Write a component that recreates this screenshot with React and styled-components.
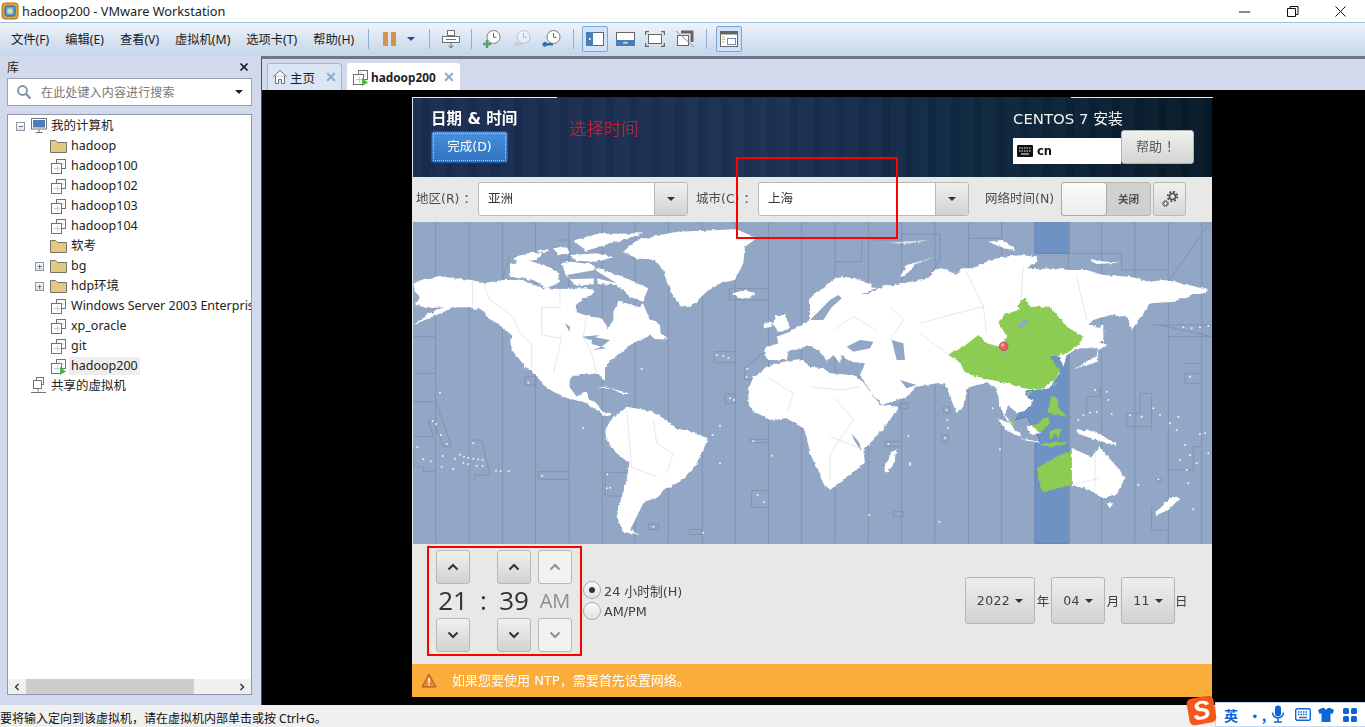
import React from "react";
import styled, { createGlobalStyle } from "styled-components";

const UI = `"Noto Sans", "Noto Sans CJK SC", sans-serif`;
const GUEST = `"DejaVu Sans", "Noto Sans CJK SC", sans-serif`;

const Global = createGlobalStyle`
  html, body { margin: 0; padding: 0; height: 100%; overflow: hidden; background: #fff; }
  #root { height: 100%; }
  * { box-sizing: border-box; }
  svg { flex: none; }
`;

const Page = styled.div`
  width: 1365px; height: 727px; display: flex; flex-direction: column;
  font-family: ${UI}; color: #222; background: #d3d9ec; overflow: hidden;
`;

/* ---------- title bar ---------- */
const TitleBar = styled.div`
  height: 22px; flex: none; background: #fff; display: flex; align-items: center; padding-left: 0;
`;
const TitleText = styled.div`font-size: 12.75px; margin-left: 2px; color: #1c1c1c; flex: 1;`;
const WinButtons = styled.div`display: flex; align-items: center; gap: 33px; padding-right: 17px;`;
const WinGlyph = styled.svg`width: 15px; height: 15px; display: block;`;

/* ---------- toolbar ---------- */
const ToolBar = styled.div`
  height: 33px; flex: none; display: flex; align-items: center; padding-left: 11px;
  background: linear-gradient(#eef3fa, #c6d6ea); border-top: 1px solid #9dbfe0;
`;
const Menu = styled.div`display: flex; gap: 16px; font-size: 12.25px; color: #1b1b1b; width: 355px; white-space: nowrap;`;
const MenuItem = styled.span``;
const Sep = styled.div`width: 1px; height: 20px; background: #8fb0d2; flex: none; margin-left: ${p => p.$ml || 0}px;`;
const ToolIcon = styled.div`
  flex: none; width: ${p => p.$w || 26}px; height: 26px; margin-left: ${p => p.$ml || 0}px;
  display: flex; align-items: center; justify-content: center; border-radius: 2px;
  border: 1px solid ${p => (p.$active ? "#7ea6d2" : "transparent")};
  background: ${p => (p.$active ? "#cfe2f8" : "transparent")};
`;

/* ---------- body ---------- */
const Body = styled.div`flex: 1; display: flex; min-height: 0;`;
const Sidebar = styled.div`
  width: 261px; flex: none; display: flex; flex-direction: column; padding: 0 9px 10px 7px;
`;
const SideHead = styled.div`
  height: 23px; display: flex; align-items: center; justify-content: space-between; font-size: 12px; padding: 1px 3px 0 0; flex: none;
`;
const SearchBox = styled.div`
  height: 28px; flex: none; background: #fff; border: 1px solid #9aa3b5; display: flex; align-items: center; padding: 0 8px;
  font-size: 12px; color: #777;
`;
const SearchText = styled.span`margin-left: 9px; flex: 1; letter-spacing: .15px;`;
const Caret = styled.span`
  width: 0; height: 0; border-left: 4px solid transparent; border-right: 4px solid transparent; border-top: 4px solid ${p => p.$c || "#222"};
`;
const TreePanel = styled.div`
  margin-top: 8px; flex: 1; min-height: 0; background: #fff; border: 1px solid #8e98ac; display: flex; flex-direction: column; overflow: hidden;
`;
const Tree = styled.div`flex: 1; padding-top: 1px; overflow: hidden;`;
const Row = styled.div`
  height: 20px; display: flex; align-items: center; white-space: nowrap; font-size: 12.5px; color: #222;
  padding-left: ${p => (p.$level ? 27 : 8)}px;
`;
const Expander = styled.div`
  width: 9px; height: 9px; flex: none; margin-right: 6px; display: flex; align-items: center; justify-content: center;
  ${p => p.$show && `border: 1px solid #8d96a5; background: linear-gradient(#fff,#dfe3ea);`}
  font-size: 9px; line-height: 1; color: #333;
`;
const Label = styled.span`
  flex: none; margin-left: 2px; padding: 0 2px; height: 18px; line-height: 18px;
  background: ${p => (p.$sel ? "#eeeeee" : "transparent")};
`;
const HScroll = styled.div`
  height: 15px; flex: none; background: #f0f0f0; display: flex; align-items: center; padding: 0 5px; gap: 5px;
`;
const ScrollTrack = styled.div`flex: 1; height: 15px; display: flex;`;
const ScrollThumb = styled.div`width: 168px; background: #cdcdcd;`;
const ScrollArrow = styled.svg`width: 8px; height: 8px; flex: none;`;

const MainPane = styled.div`
  flex: 1; min-width: 0; display: flex; flex-direction: column; border-left: 1px solid #4d5260; border-top: 3px solid #6f7585; margin-top: 1px;
`;
const TabBar = styled.div`
  height: 31px; flex: none; display: flex; align-items: flex-end; padding-left: 5px; gap: 5px; background: #d3d9ec;
`;
const Tab = styled.div`
  height: 27px; width: ${p => p.$w}px; display: flex; align-items: center; border-radius: 3px 3px 0 0; padding: 0 4px 0 4px;
  background: ${p => (p.$active ? "#fff" : "#dbe6f4")};
  border: 1px solid ${p => (p.$active ? "#fff" : "#9db8d6")}; border-bottom: 0;
  font-size: ${p => (p.$active ? 11.8 : 12.5)}px; font-weight: ${p => (p.$active ? 700 : 400)}; color: #1f1f1f;
`;
const TabLabel = styled.span`margin-left: 2px; flex: 1; white-space: nowrap;`;
const TabClose = styled.span`color: #8da9c4; font-size: 14px; font-weight: 700; line-height: 1;`;

const Viewport = styled.div`flex: 1; min-height: 0; background: #000; padding: 7px 0 0 150px;`;

/* ---------- guest ---------- */
const GuestFrame = styled.div`position: relative; width: 800px; height: 600px;`;
const Guest = styled.div`
  width: 800px; height: 600px; display: flex; flex-direction: column; font-family: ${GUEST};
  filter: blur(.35px); color: #3a3f42;
`;
const Header = styled.div`
  height: 80px; flex: none; display: flex; justify-content: space-between; padding: 13px 18px 0 18px; position: relative;
  background:
    repeating-linear-gradient(90deg, rgba(255,255,255,.018) 0 9px, rgba(0,0,0,.03) 9px 17px, rgba(255,255,255,.012) 17px 23px),
    linear-gradient(90deg, #1a2c50, #1b3054 45%, #0f2840 70%, #071a28);
  border-left: 1px solid #dfe5ee;
`;
const TopEdge = styled.div`
  position: absolute; top: 0; height: 1px; background: #e8e8e8; left: ${p => p.$l}px; width: ${p => p.$w}px;
`;
const HeadLeft = styled.div`display: flex; flex-direction: column;`;
const HeadTitle = styled.div`color: #fff; font-size: 15.5px; font-weight: 700; line-height: 19px;`;
const DoneButton = styled.div`
  margin-top: 2px; width: 77px; height: 32px; border-radius: 3px; display: flex; align-items: center; justify-content: center;
  padding-bottom: 3px; color: #fff; font-size: 12.5px; background: linear-gradient(#4a90d9, #2f72c0); border: 1px solid #1e5ba5;
  outline: 1px dotted #a8cdf2; outline-offset: -3px;
`;
const HeadRight = styled.div`display: flex; flex-direction: column; width: 181px;`;
const Centos = styled.div`color: #f2f2f2; font-size: 14.9px; line-height: 19px;`;
const KbRow = styled.div`display: flex; align-items: flex-end; height: 34px; margin-top: 1px;`;
const KbBox = styled.div`
  width: 108px; height: 26px; background: #fff; display: flex; align-items: center; padding-left: 4px; gap: 4px;
  color: #111; font-size: 11.5px; font-weight: 700;
`;
const HelpButton = styled.div`
  width: 73px; height: 34px; border-radius: 3px; display: flex; align-items: center; justify-content: center; padding-bottom: 3px;
  font-size: 13px; color: #55595c; background: linear-gradient(#f0f0ee, #d4d4d2); border: 1px solid #b5b5b3; white-space: pre;
`;

const Controls = styled.div`
  height: 45px; flex: none; background: #e8e8e7; display: flex; align-items: center; padding: 0 0 1px 4px; font-size: 12.5px; color: #4a4e50;
`;
const ControlLabel = styled.span`width: ${p => p.$w}px; padding-left: ${p => p.$pl || 0}px; padding-bottom: 3px; flex: none; white-space: pre;`;
const Combo = styled.div`
  width: ${p => p.$w}px; height: 34px; flex: none; display: flex; background: #fff; border: 1px solid #b8b8b6; border-radius: 3px; margin-right: 8px; overflow: hidden;
`;
const ComboText = styled.div`flex: 1; padding: 0 0 3px 9px; display: flex; align-items: center; color: #2e3436; font-size: 12.5px;`;
const ComboArrow = styled.div`
  width: 33px; flex: none; display: flex; align-items: center; justify-content: center; border-left: 1px solid #b8b8b6;
  background: linear-gradient(#f0f0ee, #d2d2d0);
`;
const Switch = styled.div`
  width: 90px; height: 34px; flex: none; display: flex; background: #d0d0ce; border: 1px solid #b8b8b6; border-radius: 3px;
`;
const SwitchKnob = styled.div`width: 46px; margin: -1px 0 -1px -1px; background: linear-gradient(#fbfbfa, #ececea); border: 1px solid #a8a8a6; border-radius: 3px;`;
const SwitchText = styled.div`flex: 1; display: flex; align-items: center; justify-content: center; padding-bottom: 2px; font-size: 10.5px; font-weight: 700; color: #4a4e50;`;
const GearButton = styled.div`
  width: 33px; height: 34px; flex: none; margin-left: 2px; display: flex; align-items: center; justify-content: center;
  background: linear-gradient(#f0f0ee, #d8d8d6); border: 1px solid #b8b8b6; border-radius: 3px;
`;
const MapWrap = styled.div`height: 322px; flex: none; background: #92a6c6; border-left: 1px solid #e8e8e7;`;
const MapSvg = styled.svg`width: 799px; height: 322px; display: block;`;

const TimeRow = styled.div`
  height: 120px; flex: none; background: #e8e8e7; display: flex; padding: 6px 25px 0 24px; align-items: flex-start;
`;
const Spinner = styled.div`
  display: grid; grid-template-columns: 34px 27px 34px 7px 34px; grid-template-rows: 34px 34px 34px;
`;
const SpinButton = styled.div`
  grid-column: ${p => p.$col}; grid-row: ${p => p.$row}; border-radius: 3px; display: flex; align-items: center; justify-content: center;
  border: 1px solid #b8b8b6;
  background: ${p => (p.$off ? "#f2f2f1" : "linear-gradient(#f0f0ee, #d2d2d0)")};
`;
const Digit = styled.div`
  grid-column: ${p => p.$col}; grid-row: 2; display: flex; align-items: center; justify-content: center; white-space: nowrap;
  padding-bottom: 2px; font-family: "Open Sans", sans-serif;
  font-size: ${p => p.$size || 26}px; color: ${p => p.$c || "#2e3436"};
`;
const RadioCol = styled.div`margin: 31px 0 0 11px; display: flex; flex-direction: column; gap: 3px;`;
const RadioRow = styled.div`display: flex; align-items: center; height: 18px; font-size: 12.8px; color: #3c4144; gap: 3px; white-space: nowrap;`;
const Radio = styled.div`
  width: 18px; height: 18px; border-radius: 50%; border: 1px solid #a9a9a7; background: linear-gradient(#fafafa, #e2e2e0);
  display: flex; align-items: center; justify-content: center;
`;
const RadioDot = styled.div`width: 6px; height: 6px; border-radius: 50%; background: #2e3436;`;
const DateRow = styled.div`margin: 27px 0 0 auto; display: flex; align-items: center; font-size: 12.5px; color: #3c4144;`;
const DateButton = styled.div`
  width: ${p => p.$w}px; height: 47px; display: flex; align-items: center; justify-content: center; gap: 5px; border-radius: 3px;
  background: linear-gradient(#eeeeec, #d2d2d0); border: 1px solid #b5b5b3; font-size: 12.5px; letter-spacing: .4px;
`;
const DateUnit = styled.span`width: ${p => p.$w}px; text-align: center;`;
const Warning = styled.div`
  height: 33px; flex: none; background: #fbad3c; display: flex; align-items: center; padding-left: 9px; color: #fff; font-size: 13px;
`;
const WarningText = styled.span`margin-left: 15px; padding-bottom: 2px;`;

const RedBox = styled.div`
  position: absolute; border: 2px solid #f00; pointer-events: none;
  left: ${p => p.$l}px; top: ${p => p.$t}px; width: ${p => p.$w}px; height: ${p => p.$h}px;
`;
const RedNote = styled.div`
  position: absolute; left: 157px; top: 19px; color: #e8181e; font: 300 17.3px "Noto Sans CJK SC", sans-serif; line-height: 24px;
`;

/* ---------- status ---------- */
const StatusBar = styled.div`
  height: 22px; flex: none; background: #f0f0f0; position: relative; font-size: 12px; color: #111; display: flex; align-items: center; padding-top: 3px;
`;
const Ime = styled.div`
  position: absolute; right: 0; top: -3px; height: 25px; width: 150px; background: #fff; border: 1px solid #c6d9f0; border-right: 0;
  display: flex; align-items: center; color: #0b66d6; font-weight: 700;
`;
const ImeSlot = styled.div`
  width: ${p => p.$w}px; flex: none; display: flex; align-items: center; justify-content: center;
  font-family: "Noto Sans CJK SC", sans-serif; font-size: 14px; line-height: 1;
`;
const ImeLogo = styled.div`
  position: absolute; right: 150px; top: -8px; width: 27px; height: 27px; border-radius: 5px; background: #f4571c; transform: rotate(-10deg);
  color: #fff; font: italic 900 26px "Liberation Sans", sans-serif; display: flex; align-items: center; justify-content: center; z-index: 1;
`;

/* ---------- icons ---------- */
const VmIcon = ({ play }) => (
  <svg width="17" height="17" viewBox="0 0 17 17" fill="none">
    <rect x="6.5" y="1.5" width="9" height="9" fill="#fff" stroke="#6f747c" />
    <rect x="1.5" y="5.5" width="10" height="10" fill="#fff" stroke="#6f747c" />
    <path d="M4 10.5h6M7.5 7.5v6M9 3v2M12 6h2" stroke="#b9cde4" />
    {play && <path d="M10 9l6 4.5-6 3.5z" fill="#4fb53c" />}
  </svg>
);
const FolderIcon = () => (
  <svg width="17" height="14" viewBox="0 0 17 14">
    <path d="M.5 1.5h5l2 2h9v10H.5z" fill="#e3c87f" stroke="#77736a" />
  </svg>
);
const PcIcon = () => (
  <svg width="16" height="16" viewBox="0 0 16 16">
    <rect x=".5" y=".5" width="15" height="10.5" fill="#fff" stroke="#6f747c" />
    <rect x="2" y="2" width="12" height="7.5" fill="#4b7db8" />
    <path d="M8 11v3M4.5 14.5h7" stroke="#6f747c" />
  </svg>
);
const SharedIcon = () => (
  <svg width="16" height="18" viewBox="0 0 16 18" fill="none" stroke="#6f747c">
    <rect x="5.5" y=".5" width="7" height="7" fill="#fff" />
    <rect x="2.5" y="3.5" width="8" height="8" fill="#fff" />
    <path d="M7 11.5v3M0 15.5h15" />
  </svg>
);
const Snap = ({ overlay, faded }) => (
  <svg width="20" height="20" viewBox="0 0 20 20" fill="none" opacity={faded ? 0.35 : 1}>
    <circle cx="11.5" cy="8" r="6.5" fill="#fff" stroke="#7a7f85" />
    <path d="M11.5 4v4.3h3" stroke="#666" />
    {overlay}
  </svg>
);
const PlainArrow = ({ dir = "up", c = "#2e3436" }) => (
  <svg width="12" height="8" viewBox="0 0 12 8" fill="none">
    <path d={dir === "up" ? "M1.5 6.5L6 2l4.5 4.5" : "M1.5 1.5L6 6l4.5-4.5"} stroke={c} strokeWidth="2" />
  </svg>
);

/* ---------- map ---------- */
const WATER = "#92a6c6";
const Z9 = "translate(-3 -2) scale(.33333)";
const Z10 = "translate(397 -2) scale(.33333)";

const TzLines = () => (
  <g stroke="#8193b1" fill="none" strokeWidth="3">
    {[77, 178, 277, 377, 477, 577, 675, 775, 877, 976, 1075, 1175].map(x => (
      <path key={x} transform={Z9} d={`M${x} 0V970`} />
    ))}
    {[75, 175, 275, 375, 475, 575, 775, 875, 975, 1075, 1175].map(x => (
      <path key={x} transform={Z10} d={`M${x} 0V970`} />
    ))}
    <g transform={Z9}>
      <path d="M10 350H77V460H10M10 545H77L125 680H100L70 600H55L70 650H10M10 680V740H40V755H77M178 660H215L240 765H195V780H178M345 470H378V495H345ZM385 755H477M385 755V778H477M585 757H655M585 757V828H635M913 395H976M913 395V428H976M945 522H976V550H945ZM1025 812H1075M1025 812V862H1075M1020 658H1075V668H1020ZM838 928H877V943H838ZM715 912H745V928H715ZM958 205H1075M958 205V240H1075M1003 445L1075 385M1003 445V478H1035M445 60H477V120H445M300 105L277 180" />
    </g>
    <g transform={Z10}>
      <path d="M75 125H155V65M175 60H275V42H390V120L360 165M475 55H575V0M775 100H935V150H1075M1075 185L1205 0M1025 315H1205M1050 315L1205 350H1075M1125 430H1175V460H1125V490H1175M1025 630V520H990V580H950V620H1025M1075 630V750H1150V680H1175M830 580V530H870V500M1040 775H1055V785H1040ZM1025 860V930H1075V970M225 665H275M225 665V680H275M270 550H295V565H270ZM250 875H280V890H250ZM400 560H420V580H400ZM395 645H415V665H395Z" />
    </g>
  </g>
);

const Land = () => (
  <g fill="#fff" stroke="none" filter="url(#rough)">
    <g transform={Z9}>
      {/* North and Central America */}
      <path d="M10 192L40 178L90 168L130 175L185 180L222 190L280 180L335 180L400 205L450 207L530 205L555 212L545 225L520 235L498 255L497 275L530 287L575 295L595 325L610 300L610 275L625 245L650 250L690 262L700 250L715 290L750 315L752 340L772 358L720 345L680 365L650 385L625 405L598 425L585 450L585 482L565 462L510 462L480 475L478 500L500 530L530 515L537 540L555 545L578 575L605 580L590 590L560 570L520 545L480 538L430 515L400 495L365 450L345 440L330 420L305 390L300 360L310 350L270 315L235 295L220 270L175 262L130 262L80 285L10 315L60 280L100 262L50 265L15 250L30 230L15 215Z" />
      <path d="M300 135L340 118L385 130L440 150L450 185L410 207L370 180L300 170Z" />
      <path d="M310 112L370 95L395 100L380 120L320 125Z" />
      <path d="M380 92L420 90L400 100Z" />
      <path d="M430 85L470 80L480 100L445 105Z" />
      <path d="M490 62L560 42L700 40L640 60L600 70L530 92Z" />
      <path d="M480 105L560 100L610 112L560 125L500 122Z" />
      <path d="M455 130L480 125L540 132L580 150L640 170L715 205L698 245L660 230L620 195L560 192L500 197L470 170Z" />
      {/* Greenland, Iceland */}
      <path d="M640 95L680 60L800 35L980 28L1040 55L1005 80L1000 130L975 180L930 190L890 215L840 262L810 255L785 220L770 185L760 150L735 120L680 115Z" />
      <path d="M968 220L1000 210L1035 220L1020 235L985 235Z" />
      <path d="M695 300L745 320L750 350L775 358L735 358L710 335L690 320Z" />
      {/* South America */}
      <path d="M585 630L610 590L650 560L720 572L760 595L800 625L850 635L893 655L880 690L860 730L830 770L800 790L760 810L745 830L700 850L680 890L660 930L690 945L640 935L620 890L635 830L650 780L658 730L620 700L590 660Z" />
      <path d="M560 502L600 505L640 522L665 522L620 510L590 500Z" />
      {/* British Isles */}
      <path d="M1090 310L1095 285L1125 285L1140 322L1115 335L1100 330Z" />
      <path d="M1060 310L1085 305L1085 320L1062 325Z" />
    </g>
    <g transform={Z10}>
      {/* Africa */}
      <path d="M-185 510L-170 470L-130 440L-80 425L-20 420L0 440L40 445L60 460L130 465L155 480L210 555L265 560L240 600L190 660L160 690L165 730L110 770L60 810L40 790L0 700L-10 650L-20 625L-70 595L-120 600L-170 575L-185 545Z" />
      {/* Eurasia */}
      <path d="M0 300L0 235L30 210L75 175L110 170L135 178L165 185L200 205L170 215L150 225L190 215L225 195L260 195L300 185L340 180L365 165L372 150L395 145L420 155L440 165L455 145L490 145L530 125L580 110L640 105L680 112L682 125L650 140L670 148L720 145L780 150L830 150L880 165L960 170L1020 185L1060 180L1100 185L1195 210L1180 222L1150 222L1130 235L1110 235L1095 245L1020 250L1010 265L965 330L950 290L900 285L850 300L835 310L870 325L875 360L860 385L830 385L810 385L795 390L770 405L760 440L750 410L720 405L700 420L735 440L750 455L735 480L720 500L690 510L650 510L645 525L670 545L650 570L620 580L595 555L585 585L610 615L590 600L570 560L565 530L555 500L530 490L500 495L470 505L460 560L440 580L420 530L405 490L380 490L350 495L320 500L290 530L215 555L185 520L150 465L165 430L120 425L95 405L90 430L70 405L50 425L30 395L0 378L-30 385L-65 395L-70 420L-130 420L-135 385L-95 370L-100 350L-60 335L-20 310Z" />
      <path d="M220 750L245 695L260 690L250 735L230 760Z" />
      <path d="M270 170L290 135L380 110L320 130L285 168Z" />
      <path d="M535 65L575 60L620 90L580 85Z" />
      <path d="M790 448L830 425L865 405L860 372L895 372L862 392L860 425L815 440Z" />
      <path d="M870 312L880 315L880 370L868 350Z" />
      <path d="M560 595L600 610L635 650L600 640Z" />
      <path d="M630 655L690 665L690 668L640 660Z" />
      <path d="M650 618L690 618L695 640L660 642Z" />
      <path d="M800 628L860 635L925 678L860 660L800 640Z" />
      <path d="M785 685L845 710L870 680L945 770L925 820L880 835L840 810L785 795Z" />
      <path d="M1035 880L1085 830L1110 835L1075 870L1040 885Z" />
      <path d="M890 850L910 850L900 865Z" />
      <path d="M835 120L930 128L860 132Z" />
      <path d="M230 68L360 60L290 72Z" fillOpacity=".7" />
    </g>
  </g>
);

const Water = () => (
  <g fill={WATER}>
    <g transform={Z9}>
      <path d="M545 350L600 360L575 380L548 390L590 385L545 372ZM465 310L480 320L478 335ZM515 350L570 345L540 360Z" />
      <path d="M470 165L555 150L620 190L560 175L480 178Z" />
      <path d="M555 125L565 205L550 205Z" />
    </g>
    <g transform={Z10}>
      <path d="M0 300L25 275L60 240L85 225L95 235L65 262L40 300Z" />
      <path d="M110 380L150 360L190 365L180 385L130 395Z" />
      <path d="M245 360L280 370L285 420L260 420Z" />
      <path d="M270 480L320 495L290 505Z" />
      <path d="M125 640L132 660L155 695L148 668Z" />
    </g>
  </g>
);

const Green = () => (
  <g fill="#8ccc52" filter="url(#rough)">
    <g transform={Z10}>
      <path d="M415 405L460 380L505 345L530 370L570 380L590 350L565 305L590 280L630 270L625 255L645 230L660 260L720 260L770 320L822 350L805 375L770 400L720 410L750 450L735 480L690 510L640 505L590 490L520 475L465 460L450 425Z" />
      <path d="M680 745L750 705L785 695L785 795L700 815L685 780Z" />
      <path d="M665 618L715 590L720 610L690 640Z" />
      <path d="M725 528L742 530L745 560L770 590L730 585L712 575Z" />
      <path d="M720 630L755 625L745 655L735 640L720 660Z" />
      <path d="M595 590L615 610L608 615Z" />
      <path d="M650 515L665 515L655 530Z" />
      <path d="M730 490L740 490L728 503Z" />
      <path d="M690 672L770 665L770 672L720 680Z" />
    </g>
  </g>
);

const DOTS9 = [[90,518],[68,603],[78,612],[92,645],[110,672],[22,682],[40,718],[62,724],[98,708],[95,740],[130,747],[190,670],[258,752],[272,754],[296,754],[135,716],[150,704],[162,710],[175,714],[190,716],[205,718],[218,720],[160,730],[175,732],[200,738],[218,738],[355,488],[397,768],[592,763],[590,805],[601,803],[695,447],[940,408],[955,414],[920,406],[1012,446],[1010,472],[1030,470],[960,535],[972,540],[930,617],[908,645],[930,730],[1030,664],[1086,707],[1043,825],[1062,846],[520,625],[730,920],[880,938]];
const DOTS10 = [[235,672],[295,648],[300,735],[178,885],[388,905],[410,570],[412,600],[414,625],[405,655],[570,688],[548,565],[820,585],[840,578],[860,575],[905,582],[960,585],[995,590],[1030,565],[1050,585],[1080,610],[1100,630],[1105,590],[890,515],[895,540],[855,510],[805,600],[1120,322],[1145,325],[1170,322],[1195,318],[1140,470],[1170,642],[1185,640],[1125,675],[1140,705],[1110,720],[1160,730],[1130,750],[1195,700],[1135,790],[1045,778],[1150,868],[985,795],[300,730]];

const WorldMap = () => (
  <MapSvg viewBox="0 0 799 322">
    <defs>
      <filter id="rough" x="-5%" y="-5%" width="110%" height="110%">
        <feTurbulence type="fractalNoise" baseFrequency=".22" numOctaves="2" seed="4" />
        <feDisplacementMap in="SourceGraphic" scale="3.5" xChannelSelector="R" yChannelSelector="G" />
      </filter>
    </defs>
    <path transform={Z10} d="M675 0H777V100H675ZM725 400H777V970H675V670L690 660L650 590L615 600L640 570L650 510L725 500Z" fill="#6f92c4" stroke="#5f7fb0" strokeWidth="3" />
    <TzLines />
    <Land />
    <Water />
    <g transform={Z9} stroke="#d8dce2" strokeWidth="2" fill="none">
      <path d="M188 182V262M220 190L240 240L310 290M450 207V262H395V345L455 355L430 460M310 290L330 340L365 370L365 450M530 290L520 350L545 400L560 460M650 570L660 680L665 740M730 600L740 670L790 700L770 760M660 740L740 770M1070 470L1150 520L1130 580" />
    </g>
    <g transform={Z10} stroke="#d8dce2" strokeWidth="2" fill="none">
      <path d="M240 260L280 300L240 360M330 310L400 290L520 260L470 155M520 260L530 340M640 140L630 270M800 170L830 300M330 340L410 400L470 440M70 330L130 290L200 330M70 530L130 600L60 700L60 780M165 690L60 650M0 500L90 510L150 500M855 690V800M785 795L865 775" />
    </g>
    <Green />
    <path transform={Z10} d="M640 298L655 300L640 322L620 325Z" fill={WATER} />
    <g fill="#f2f2f2">
      {DOTS9.map(([x, y], i) => <circle key={i} transform={Z9} cx={x} cy={y} r="3" />)}
      {DOTS10.map(([x, y], i) => <circle key={i} transform={Z10} cx={x} cy={y} r="3" />)}
    </g>
    <g transform={Z10}>
      <path d="M578 392H584V404H578Z" fill="#aaa" />
      <circle cx="581" cy="379" r="13" fill="#ec5f63" stroke="#b83a3e" strokeWidth="2" />
      <circle cx="578" cy="375" r="5" fill="#f7a8aa" />
    </g>
  </MapSvg>
);

const TREE = [
  { n: "hadoop", i: "f" }, { n: "hadoop100", i: "v" }, { n: "hadoop102", i: "v" }, { n: "hadoop103", i: "v" },
  { n: "hadoop104", i: "v" }, { n: "软考", i: "f" }, { n: "bg", i: "f", e: 1 }, { n: "hdp环境", i: "f", e: 1 },
  { n: "Windows Server 2003 Enterprise", i: "v" }, { n: "xp_oracle", i: "v" }, { n: "git", i: "v" },
  { n: "hadoop200", i: "p", s: 1 },
];
const MENUS = ["文件(F)", "编辑(E)", "查看(V)", "虚拟机(M)", "选项卡(T)", "帮助(H)"];

export default function App() {
  return (
    <Page>
      <Global />
      <TitleBar>
        <svg width="20" height="20" viewBox="0 0 20 20">
          <rect x="2" y="2" width="16" height="16" rx="3" fill="#e9a53c" stroke="#a86c18" />
          <rect x="5" y="5" width="10" height="10" rx="1.5" fill="#5aa2d8" stroke="#1f5f8f" />
          <rect x="7.5" y="7.5" width="5" height="5" fill="#e8d8a0" />
        </svg>
        <TitleText>hadoop200 - VMware Workstation</TitleText>
        <WinButtons>
          <WinGlyph viewBox="0 0 15 15"><path d="M2 8h11" stroke="#111" /></WinGlyph>
          <WinGlyph viewBox="0 0 15 15" fill="none" stroke="#111"><path d="M5 4V2.5h8v8H11M2.5 4.500h8v8h-8z" /></WinGlyph>
          <WinGlyph viewBox="0 0 15 15"><path d="M2.5 2.5l10 10M12.5 2.5l-10 10" stroke="#111" /></WinGlyph>
        </WinButtons>
      </TitleBar>

      <ToolBar>
        <Menu>{MENUS.map(m => <MenuItem key={m}>{m}</MenuItem>)}</Menu>
        <Sep $ml={2} />
        <ToolIcon $w={14} $ml={14}>
          <svg width="14" height="14" viewBox="0 0 14 14"><path d="M0 0h5v14H0zM8 0h5v14H8z" fill="#cf9450" /></svg>
        </ToolIcon>
        <ToolIcon $w={10} $ml={9}><Caret $c="#2b4d9a" /></ToolIcon>
        <Sep $ml={13} />
        <ToolIcon $ml={8}>
          <svg width="20" height="20" viewBox="0 0 20 20" fill="#fff" stroke="#6d7278">
            <rect x="6.5" y="1.5" width="7" height="5" />
            <rect x="1.5" y="7.5" width="17" height="6" />
            <path d="M5 10.500h10M10 14v5M7.500 16.500l2.500 2.500 2.500-2.500" fill="none" />
          </svg>
        </ToolIcon>
        <Sep $ml={7} />
        <ToolIcon $ml={7}><Snap overlay={<path d="M1 15h8M5 11v8" stroke="#5f9b6a" strokeWidth="2.4" />} /></ToolIcon>
        <ToolIcon $ml={4}><Snap faded overlay={<path d="M1 15l4-3v2h5v2.500H5V18z" fill="#c7a184" stroke="none" />} /></ToolIcon>
        <ToolIcon $ml={4}><Snap overlay={<path d="M1 17a2.500 2.500 0 0 1 4-3h6v2.500H5a2.500 2.500 0 0 1-4 .5z" fill="#2f6fb2" stroke="none" />} /></ToolIcon>
        <Sep $ml={8} />
        <ToolIcon $active $ml={8}>
          <svg width="18" height="14" viewBox="0 0 18 14"><rect x=".5" y=".5" width="17" height="13" fill="#fff" stroke="#666" /><rect width="7" height="14" fill="#4a7db3" /><path d="M3 6h1.500v2H3z" fill="#fff" /></svg>
        </ToolIcon>
        <ToolIcon $ml={4}>
          <svg width="19" height="14" viewBox="0 0 19 14"><rect x=".5" y=".5" width="18" height="13" fill="#fff" stroke="#666" /><rect y="8" width="19" height="6" fill="#4a7db3" /><path d="M7 11h5M9 10h1" stroke="#fff" /></svg>
        </ToolIcon>
        <ToolIcon $ml={4}>
          <svg width="20" height="16" viewBox="0 0 20 16" fill="none" stroke="#666"><rect x="3.500" y="3.500" width="13" height="9" fill="#fff" /><path d="M.5 4V.5H4M16 .5h3.500V4M.5 12v3.500H4M16 15.500h3.500V12" strokeWidth="1.5" /></svg>
        </ToolIcon>
        <ToolIcon $ml={4}>
          <svg width="20" height="18" viewBox="0 0 20 18" fill="none" stroke="#666"><path d="M6 2h11v10" strokeWidth="3" /><rect x="2.500" y="5.500" width="11" height="10" fill="#fff" /><path d="M1 1l18 16" stroke="#8a8f95" /></svg>
        </ToolIcon>
        <Sep $ml={8} />
        <ToolIcon $active $ml={9}>
          <svg width="18" height="16" viewBox="0 0 18 16"><rect x=".5" y=".5" width="17" height="15" fill="#fff" stroke="#666" /><rect width="18" height="3.500" fill="#666" /><path d="M2 6h3M2 8.500h3M2 11h3" stroke="#e0b040" /><rect x="7.500" y="7.500" width="8" height="6" fill="#fff" stroke="#6f8fb8" /></svg>
        </ToolIcon>
      </ToolBar>

      <Body>
        <Sidebar>
          <SideHead>
            <span>库</span>
            <svg width="10" height="10" viewBox="0 0 10 10"><path d="M1.500 1.500l7 7M8.500 1.500l-7 7" stroke="#111" strokeWidth="1.600" /></svg>
          </SideHead>
          <SearchBox>
            <svg width="16" height="16" viewBox="0 0 16 16" fill="none"><circle cx="6.500" cy="6.500" r="4.500" stroke="#7f90ad" strokeWidth="1.800" /><path d="M10 10l4.500 4.500" stroke="#7f90ad" strokeWidth="2.200" /></svg>
            <SearchText>在此处键入内容进行搜索</SearchText>
            <Caret />
          </SearchBox>
          <TreePanel>
            <Tree>
              <Row>
                <Expander $show>−</Expander><PcIcon /><Label>我的计算机</Label>
              </Row>
              {TREE.map(t => (
                <Row key={t.n} $level={1}>
                  <Expander $show={t.e}>{t.e ? "+" : ""}</Expander>
                  {t.i === "f" ? <FolderIcon /> : <VmIcon play={t.i === "p"} />}
                  <Label $sel={t.s}>{t.n}</Label>
                </Row>
              ))}
              <Row>
                <Expander /><SharedIcon /><Label>共享的虚拟机</Label>
              </Row>
            </Tree>
            <HScroll>
              <ScrollArrow viewBox="0 0 8 8"><path d="M5.500 1L2.500 4l3 3" fill="none" stroke="#333" strokeWidth="1.400" /></ScrollArrow>
              <ScrollTrack><ScrollThumb /></ScrollTrack>
              <ScrollArrow viewBox="0 0 8 8"><path d="M2.500 1l3 3-3 3" fill="none" stroke="#333" strokeWidth="1.400" /></ScrollArrow>
            </HScroll>
          </TreePanel>
        </Sidebar>

        <MainPane>
          <TabBar>
            <Tab $w={75}>
              <svg width="16" height="16" viewBox="0 0 16 16" fill="#fff" stroke="#6f747c"><path d="M1 8l7-6.500L15 8M3.500 6.500v8h3v-4h3v4h3v-8" /></svg>
              <TabLabel>主页</TabLabel><TabClose>✕</TabClose>
            </Tab>
            <Tab $w={113} $active>
              <VmIcon play />
              <TabLabel>hadoop200</TabLabel><TabClose>✕</TabClose>
            </Tab>
          </TabBar>
          <Viewport>
            <GuestFrame>
              <Guest>
                <Header>
                  <TopEdge $l={0} $w={144} />
                  <TopEdge $l={658} $w={142} />
                  <HeadLeft>
                    <HeadTitle>日期 &amp; 时间</HeadTitle>
                    <DoneButton>完成(D)</DoneButton>
                  </HeadLeft>
                  <HeadRight>
                    <Centos>CENTOS 7 安装</Centos>
                    <KbRow>
                      <KbBox>
                        <svg width="16" height="12" viewBox="0 0 16 12"><rect width="16" height="12" rx="1" fill="#111" /><path d="M2 3h12M2 6h12" stroke="#fff" strokeDasharray="1.500 1" /><path d="M4 9h8" stroke="#fff" /></svg>
                        cn
                      </KbBox>
                      <HelpButton>帮助 ！</HelpButton>
                    </KbRow>
                  </HeadRight>
                </Header>
                <Controls>
                  <ControlLabel $w={62}>地区(R) ：</ControlLabel>
                  <Combo $w={210}><ComboText>亚洲</ComboText><ComboArrow><Caret $c="#333" /></ComboArrow></Combo>
                  <ControlLabel $w={62}>城市(C) ：</ControlLabel>
                  <Combo $w={211}><ComboText>上海</ComboText><ComboArrow><Caret $c="#333" /></ComboArrow></Combo>
                  <ControlLabel $w={84} $pl={8}>网络时间(N)</ControlLabel>
                  <Switch><SwitchKnob /><SwitchText>关闭</SwitchText></Switch>
                  <GearButton>
                    <svg width="20" height="20" viewBox="0 0 20 20" fill="none" stroke="#4a4e50">
                      <circle cx="12.500" cy="7.500" r="3" strokeWidth="1.600" />
                      <circle cx="12.500" cy="7.500" r="4.800" strokeWidth="1.800" strokeDasharray="1.900 1.870" />
                      <circle cx="5.500" cy="14.500" r="2" strokeWidth="1" />
                      <circle cx="5.500" cy="14.500" r="3" strokeWidth="1" strokeDasharray="1.200 1.150" />
                    </svg>
                  </GearButton>
                </Controls>
                <MapWrap><WorldMap /></MapWrap>
                <TimeRow>
                  <Spinner>
                    <SpinButton $col={1} $row={1}><PlainArrow /></SpinButton>
                    <SpinButton $col={3} $row={1}><PlainArrow /></SpinButton>
                    <SpinButton $col={5} $row={1} $off><PlainArrow c="#8b8f90" /></SpinButton>
                    <Digit $col={1}>21</Digit>
                    <Digit $col={2}>:</Digit>
                    <Digit $col={3}>39</Digit>
                    <Digit $col={5} $size={20} $c="#8b8f90">AM</Digit>
                    <SpinButton $col={1} $row={3}><PlainArrow dir="down" /></SpinButton>
                    <SpinButton $col={3} $row={3}><PlainArrow dir="down" /></SpinButton>
                    <SpinButton $col={5} $row={3} $off><PlainArrow dir="down" c="#8b8f90" /></SpinButton>
                  </Spinner>
                  <RadioCol>
                    <RadioRow><Radio><RadioDot /></Radio>24 小时制(H)</RadioRow>
                    <RadioRow><Radio />AM/PM</RadioRow>
                  </RadioCol>
                  <DateRow>
                    <DateButton $w={70}>2022 <Caret $c="#333" /></DateButton>
                    <DateUnit $w={16}>年</DateUnit>
                    <DateButton $w={54}>04 <Caret $c="#333" /></DateButton>
                    <DateUnit $w={16}>月</DateUnit>
                    <DateButton $w={54}>11 <Caret $c="#333" /></DateButton>
                    <DateUnit $w={12}>日</DateUnit>
                  </DateRow>
                </TimeRow>
                <Warning>
                  <svg width="16" height="15" viewBox="0 0 16 15"><path d="M8 1l7 13H1z" fill="#f5832a" stroke="#a8561a" /><path d="M8 5v5M8 11v1.500" stroke="#fff" strokeWidth="1.600" /></svg>
                  <WarningText>如果您要使用 NTP，需要首先设置网络。</WarningText>
                </Warning>
              </Guest>
              <RedNote>选择时间</RedNote>
              <RedBox $l={324} $t={60} $w={162} $h={82} />
              <RedBox $l={15} $t={449} $w={155} $h={110} />
            </GuestFrame>
          </Viewport>
        </MainPane>
      </Body>

      <StatusBar>
        要将输入定向到该虚拟机，请在虚拟机内部单击或按 Ctrl+G。
        <ImeLogo>S</ImeLogo>
        <Ime>
          <ImeSlot $w={30}>英</ImeSlot>
          <ImeSlot $w={22}>•,</ImeSlot>
          <ImeSlot $w={20}>
            <svg width="14" height="19" viewBox="0 0 14 18" fill="#0b66d6"><rect x="4" y="0" width="6" height="11" rx="3" /><path d="M1.500 7a5.500 5.500 0 0 0 11 0M7 13v3M3 16.500h8" fill="none" stroke="#0b66d6" strokeWidth="1.500" /></svg>
          </ImeSlot>
          <ImeSlot $w={30}>
            <svg width="16" height="13" viewBox="0 0 16 13" fill="none" stroke="#0b66d6" strokeWidth="1.400"><rect x=".7" y=".7" width="14.600" height="11.600" rx="1.500" /><path d="M3 4h10M3 6.500h10" strokeDasharray="1.500 1" /><path d="M4 9.500h8" /></svg>
          </ImeSlot>
          <ImeSlot $w={16}>
            <svg width="16" height="14" viewBox="0 0 16 14" fill="#0b66d6"><path d="M0 2l4-2h2.500a1.500 1.500 0 0 0 3 0H12l4 2-1.500 4-2-.7V14h-9V5.300l-2 .7z" /></svg>
          </ImeSlot>
          <ImeSlot $w={31}>
            <svg width="14" height="14" viewBox="0 0 14 14" fill="#0b66d6"><rect width="6" height="6" rx="1.500" /><rect x="8" width="6" height="6" rx="1.500" /><rect y="8" width="6" height="6" rx="1.500" /><rect x="8" y="8" width="6" height="6" rx="1.500" /></svg>
          </ImeSlot>
        </Ime>
      </StatusBar>
    </Page>
  );
}
